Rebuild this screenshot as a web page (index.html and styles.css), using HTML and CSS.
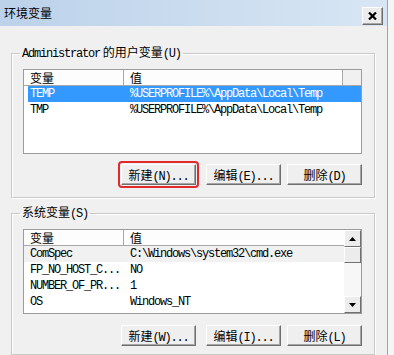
FILE: index.html
```html
<!DOCTYPE html>
<html lang="zh-CN">
<head>
  <meta charset="UTF-8">
  <meta name="viewport" content="width=device-width, initial-scale=1.0" />
  <title>环境变量</title>
  <link rel="stylesheet" href="styles.css">
</head>
<body>
  <div class="window">
    <div class="titlebar">
      <span class="title">环境变量</span>
      <button class="close" aria-label="关闭">
        <svg width="9" height="8" viewBox="0 0 9 8"><path d="M1 0.5 L8 7.5 M8 0.5 L1 7.5" stroke="#000" stroke-width="2.2"/></svg>
      </button>
    </div>

    <!-- user variables -->
    <fieldset class="group group-user">
      <legend><span class="lat">Administrator</span> 的用户变量<span class="lat">(U)</span></legend>
      <div class="list">
        <div class="list-main">
          <div class="list-head">
            <span class="th th-name">变量</span>
            <span class="th th-value">值</span>
            <span class="th th-rest"></span>
          </div>
          <div class="row selected"><span class="td td-name">TEMP</span><span class="td td-value">%USERPROFILE%\AppData\Local\Temp</span></div>
          <div class="row"><span class="td td-name">TMP</span><span class="td td-value">%USERPROFILE%\AppData\Local\Temp</span></div>
        </div>
      </div>
      <div class="buttons">
        <button class="btn btn-new marked">新建<span class="lat">(N)...</span></button>
        <button class="btn">编辑<span class="lat">(E)...</span></button>
        <button class="btn">删除<span class="lat">(D)</span></button>
      </div>
    </fieldset>

    <!-- system variables -->
    <fieldset class="group group-sys">
      <legend>系统变量<span class="lat">(S)</span></legend>
      <div class="list">
        <div class="list-main">
          <div class="list-head">
            <span class="th th-name">变量</span>
            <span class="th th-value th-last">值</span>
          </div>
          <div class="row current"><span class="td td-name">ComSpec</span><span class="td td-value">C:\Windows\system32\cmd.exe</span></div>
          <div class="row"><span class="td td-name">FP_NO_HOST_C...</span><span class="td td-value">NO</span></div>
          <div class="row"><span class="td td-name">NUMBER_OF_PR...</span><span class="td td-value">1</span></div>
          <div class="row"><span class="td td-name">OS</span><span class="td td-value">Windows_NT</span></div>
        </div>
        <div class="scrollbar">
          <div class="sb-btn"><svg width="7" height="4" viewBox="0 0 7 4"><path d="M3.5 0 L7 4 L0 4 Z" fill="#000"/></svg></div>
          <div class="sb-thumb"></div>
          <div class="sb-track"></div>
          <div class="sb-btn"><svg width="7" height="4" viewBox="0 0 7 4"><path d="M0 0 L7 0 L3.5 4 Z" fill="#000"/></svg></div>
        </div>
      </div>
      <div class="buttons">
        <button class="btn btn-new">新建<span class="lat">(W)...</span></button>
        <button class="btn">编辑<span class="lat">(I)...</span></button>
        <button class="btn">删除<span class="lat">(L)</span></button>
      </div>
    </fieldset>
  </div>
</body>
</html>
```

FILE: styles.css
```css
body {
  margin: 0;
  background: #f5f5f5;
  font-family: "Noto Sans CJK SC", "Liberation Sans", sans-serif;
  font-size: 12px;
  color: #000;
  overflow: hidden;
}

.lat {
  font-family: "Liberation Mono", "Noto Sans CJK SC", monospace;
  letter-spacing: -1.2px;
}

.window {
  width: 387px;
  height: 355px;
  background: #f0f0f0;
  border-right: 1px solid #a3a3a3;
}

.titlebar {
  height: 26px;
  display: flex;
  align-items: center;
  justify-content: space-between;
  padding: 0 4px 0 4px;
  background: linear-gradient(to right, #bcd2ea, #d8e6f4);
}

.title {
  font-size: 12px;
  line-height: 14px;
}

.close {
  width: 21px;
  height: 18px;
  margin-top: 6px;
  padding: 0;
  display: flex;
  align-items: center;
  justify-content: center;
  background: #ececec;
  border: 1px solid;
  border-color: #fff #6d6d6d #6d6d6d #fff;
  box-shadow: inset -1px -1px 0 #a8a8a8;
}

/* group boxes */
.group {
  box-sizing: border-box;
  width: 364px;
  min-width: 0;
  margin: 19px 0 0 11px;
  padding: 8px 12px 12px 11px;
  border: 1px solid #c9c9c9;
  box-shadow: inset 1px 1px 0 #fff, 1px 1px 0 #fff;
}

.group-sys {
  margin-top: 7px;
  padding-bottom: 8px;
}

.group legend {
  margin-left: -3px;
  padding: 0 2px;
  line-height: 14px;
  font-size: 12px;
}

/* list views */
.list {
  height: 85px;
  box-sizing: border-box;
  display: flex;
  background: #fff;
  border: 1px solid #9c9c9c;
}

.list-main {
  flex: 1;
}

.list-head {
  display: flex;
  height: 15px;
  border-bottom: 1px solid #a8a8a8;
  line-height: 15px;
}

.th {
  box-sizing: border-box;
  padding-left: 6px;
  border-right: 1px solid #a8a8a8;
  background: #fdfdfd;
}

.th-name { width: 100px; }
.th-value { width: 219px; }
.th-last { flex: 1; border-right: none; }
.th-rest { flex: 1; border-right: none; background: #f0f0f0; }

.row {
  display: grid;
  grid-template-columns: 96px 220px;
  height: 16px;
  line-height: 16px;
  margin-left: 4px;
}

.group-sys .row {
  margin-left: 0;
  grid-template-columns: 100px 219px;
}

.td {
  font-family: "Liberation Mono", monospace;
  font-size: 12px;
  letter-spacing: -1.2px;
  white-space: nowrap;
  overflow: hidden;
}

.td-name { padding-left: 2px; }
.td-value { padding-left: 6px; }
.group-sys .td-name { padding-left: 6px; }

.selected {
  background: #3399ff;
  color: #fff;
}

.current {
  background: #f1f1f1;
}

/* scrollbar */
.scrollbar {
  width: 17px;
  display: flex;
  flex-direction: column;
  background: #f2f2f2;
}

.sb-btn,
.sb-thumb {
  box-sizing: border-box;
  height: 17px;
  display: flex;
  align-items: center;
  justify-content: center;
  background: #ececec;
  border: 1px solid;
  border-color: #fff #717171 #717171 #fff;
}

.sb-thumb {
  height: 16px;
}

.sb-track {
  flex: 1;
  background: #f7f7f7;
}

/* buttons */
.buttons {
  display: flex;
  justify-content: flex-end;
  gap: 6px;
  margin-top: 10px;
}

.group-sys .buttons {
  margin-top: 11px;
}

.btn {
  box-sizing: border-box;
  width: 75px;
  height: 21px;
  padding: 0;
  font-family: inherit;
  font-size: 12px;
  line-height: 19px;
  color: #000;
  background: #efefef;
  border: 1px solid;
  border-color: #fff #6f6f6f #6f6f6f #fff;
  box-shadow: inset -1px -1px 0 #a5a5a5;
}

.btn-new {
  margin-right: 4px;
}

.marked {
  outline: 2px solid #e02a2c;
  outline-offset: 1px;
  border-radius: 1px;
}
```
